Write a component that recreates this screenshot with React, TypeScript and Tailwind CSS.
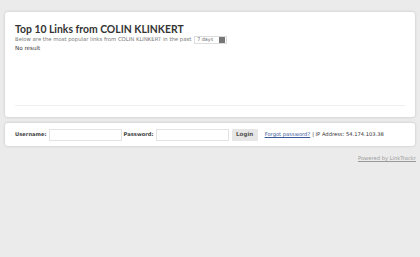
export default function App() {
  return (
    <div className="min-h-[257px] w-[420px] bg-[#ebebeb] pt-[12px] font-['DejaVu_Sans',sans-serif] text-[#333]">
      <div className="mx-[5px] rounded-[3px] bg-white px-[10px] pb-[11px] pt-[11px] shadow-[0_0_3px_rgba(0,0,0,0.18)]">
        <h1 className="font-['Lato',sans-serif] text-[10.4px] font-bold leading-[12px] text-[#333]">Top 10 Links from COLIN KLINKERT</h1>
        <div className="mt-[1px] flex items-center gap-[3px] text-[5.3px] text-[#777]">
          <span>Below are the most popular links from COLIN KLINKERT in the past</span>
          <div className="flex h-[8px] w-[33px] items-center justify-between border border-[#ddd] bg-white pl-[2px] pr-[1px]">
            <span className="text-[4.8px] text-[#666]">7 days</span>
            <span className="block h-[6px] w-[6px] bg-[#777]" />
          </div>
        </div>
        <p className="text-[5.6px] leading-[8px] text-[#333]">No result</p>
        <div className="mt-[53px] border-t border-[#f0f0f0]" />
      </div>
      <div className="mx-[5px] mt-[6px] flex h-[23px] items-center rounded-[3px] bg-white px-[10px] text-[5.2px] shadow-[0_0_3px_rgba(0,0,0,0.18)]">
        <span className="font-bold text-[#444]">Username:</span>
        <input className="ml-[2px] h-[12px] w-[73px] border border-[#e3e3e3] bg-white" />
        <span className="ml-[2px] font-bold text-[#444]">Password:</span>
        <input className="ml-[2px] h-[12px] w-[73px] border border-[#e3e3e3] bg-white" />
        <button className="ml-[3px] h-[12px] w-[26px] rounded-[1px] bg-[#e6e6e6] text-[5.6px] font-bold text-[#555]">Login</button>
        <a className="ml-[7px] text-[#3b5998] underline">Forgot password?</a>
        <span className="ml-[2px] text-[#333]">| IP Address: 54.174.103.38</span>
      </div>
      <div className="mr-[4px] mt-[9px] text-right text-[5.2px] text-[#999] underline">Powered by LinkTrackr</div>
    </div>
  );
}
